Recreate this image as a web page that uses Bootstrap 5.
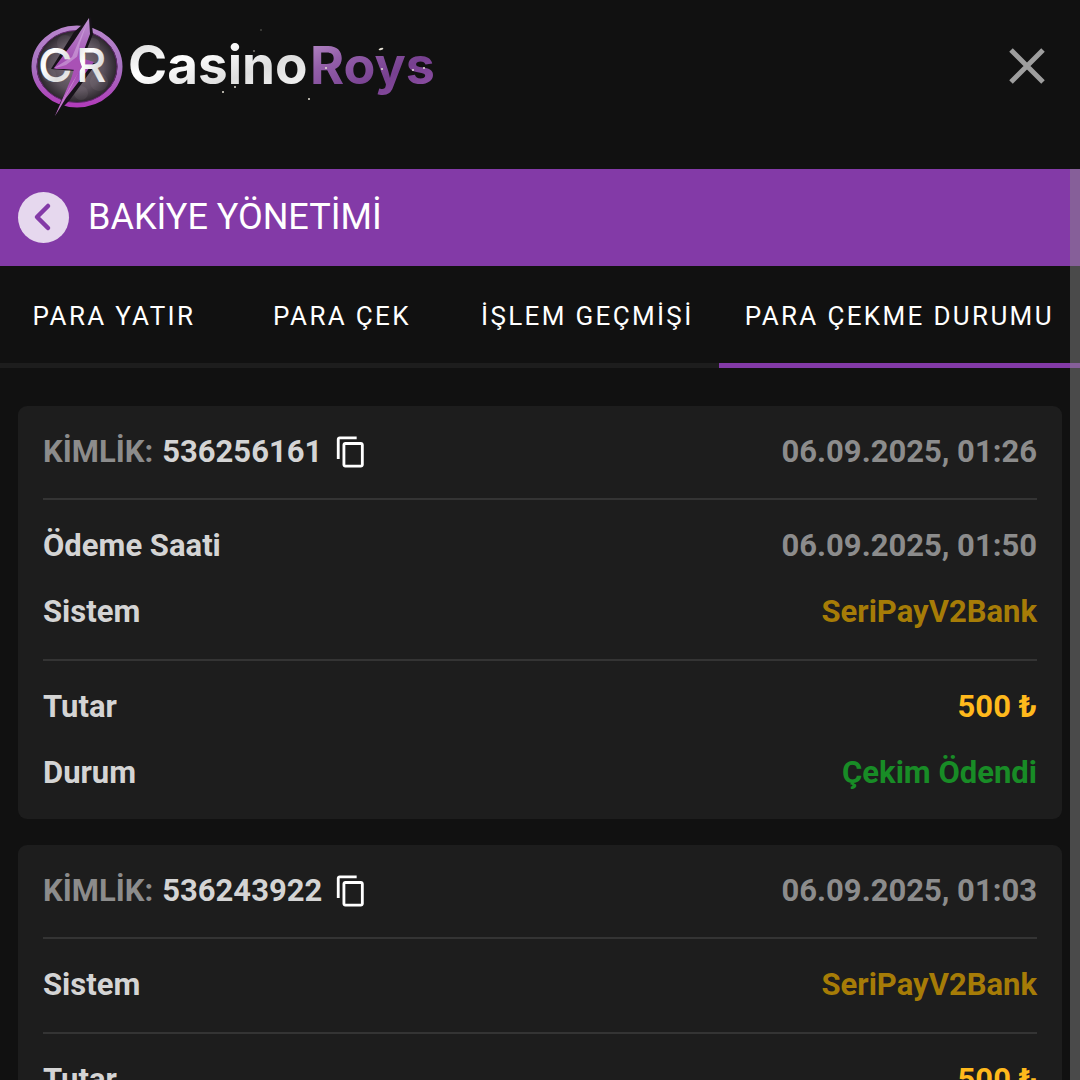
<!DOCTYPE html>
<html lang="tr">
<head>
<meta charset="utf-8">
<meta name="viewport" content="width=device-width, initial-scale=1">
<title>CasinoRoys</title>
<link href="https://cdn.jsdelivr.net/npm/bootstrap@5.3.0/dist/css/bootstrap.min.css" rel="stylesheet">
<style>
  body { background: #111; color: #d4d4d4; font-family: Roboto, "Noto Sans", sans-serif; }
  .site-head { padding: 10px 34px 39px 20px; }
  .brand-logo { width: 430px; height: 120px; }
  .close-btn { width: 38px; height: 38px; margin-top: 37px; color: #9e9e9e; }
  .title-bar { background: #833aa7; padding: 23px 18px; gap: 19px; }
  .title-bar h1 { font-size: 36px; line-height: 51px; font-weight: 400; color: #fff; }
  .back-btn { width: 51px; height: 51px; background: #e6d8ee; color: #833aa7; }
  .pay-tabs { box-shadow: inset 0 -5px #1d1d1d; }
  .pay-tabs .nav-link { min-width: 228px; padding: 30px 25px 27px; border-bottom: 5px solid transparent; border-radius: 0; font-size: 26px; line-height: 40px; letter-spacing: .09em; color: #fff; text-align: center; white-space: nowrap; }
  .pay-tabs .nav-link.active { border-color: #833aa7; }
  .pay-list { padding: 38px 18px; gap: 26px; }
  .pay-card { background: #1d1d1d; border-radius: 9px; padding: 0 25px; font-size: 31px; line-height: 40px; font-weight: 700; }
  .pay-part { padding: 26px 0; gap: 26px; }
  .pay-part:nth-child(2) { padding-bottom: 27px; }
  .pay-part + .pay-part { border-top: 2px solid #343434; }
  .tone-dim { color: #8c8c8c; }
  .tone-bank { color: #a67c07; }
  .tone-sum { color: #ffb91c; }
  .tone-paid { color: #188c26; }
  .id-gap { gap: 9px; }
  .copy-btn { color: #fff; width: 34px; height: 34px; margin-left: 3px; }
  .scroll-thumb { width: 10px; background: rgba(139, 139, 139, .47); }
</style>
<script src="https://cdn.jsdelivr.net/npm/bootstrap@5.3.0/dist/js/bootstrap.bundle.min.js"></script>
</head>
<body>
<svg width="0" height="0" class="position-absolute" aria-hidden="true">
  <symbol id="copy" viewBox="0 0 24 24"><path fill="currentColor" d="M16 1H4c-1.100 0-2 .9-2 2v14h2V3h12V1zm3 4H8c-1.100 0-2 .9-2 2v14c0 1.100.9 2 2 2h11c1.100 0 2-.9 2-2V7c0-1.100-.9-2-2-2zm0 16H8V7h11v14z"/></symbol>
</svg>
<div class="vh-100 d-flex flex-column overflow-hidden">
  <header class="site-head d-flex justify-content-between align-items-start flex-shrink-0">
    <a href="#" aria-label="CasinoRoys">
      <svg class="brand-logo d-block" viewBox="20 10 430 120">
        <defs>
          <linearGradient id="ring" x1="0" y1="0" x2="0" y2="1"><stop offset="0" stop-color="#b884cc"/><stop offset=".5" stop-color="#a672c0"/><stop offset="1" stop-color="#b13dba"/></linearGradient>
          <radialGradient id="moon"><stop offset="0" stop-color="#81757f"/><stop offset=".65" stop-color="#5b515b"/><stop offset="1" stop-color="#282329"/></radialGradient>
          <linearGradient id="silver" x1="0" y1="0" x2="1" y2="1"><stop offset="0" stop-color="#d0d0d0"/><stop offset=".35" stop-color="#fff"/><stop offset=".65" stop-color="#dedede"/><stop offset="1" stop-color="#fafafa"/></linearGradient>
          <linearGradient id="violet" x1="0" y1="0" x2="1" y2="1"><stop offset="0" stop-color="#bd93cd"/><stop offset=".3" stop-color="#935fa9"/><stop offset=".65" stop-color="#774090"/><stop offset="1" stop-color="#9353a9"/></linearGradient>
          <linearGradient id="bolt" x1="0" y1="0" x2="0" y2="1"><stop offset="0" stop-color="#bd91d0"/><stop offset=".5" stop-color="#9e45ae"/><stop offset="1" stop-color="#c674cd"/></linearGradient>
        </defs>
        <ellipse cx="77" cy="66.500" rx="41" ry="37" fill="url(#moon)"/>
        <g fill="#aaa0a9" opacity=".1"><circle cx="65" cy="43" r="8"/><circle cx="93" cy="45" r="7"/><circle cx="99" cy="82" r="9"/><circle cx="81" cy="93" r="7"/><circle cx="49" cy="75" r="7"/></g>
        <ellipse cx="77" cy="66.500" rx="43" ry="38.500" fill="none" stroke="url(#ring)" stroke-width="5"/>
        <ellipse cx="77" cy="66.500" rx="40" ry="36" fill="none" stroke="#61266c" stroke-width="1"/>
        <path d="M91 17 74 32 51 69 76 71 53 117 69 101 96 64 83 59 93 34Z" fill="#171219"/>
        <path d="M89 18 74 41 54 68 75 70 71 79 55 116 66 98 94 62 81 58 90 34Z" fill="url(#bolt)"/>
        <path d="M89 18 78 43 72 57 54 68 75 67 80 43Z" fill="#d0a3dc" opacity=".65"/>
        <path d="M80 69 69 89 55 116 73 83Z" fill="#e2afe5" opacity=".65"/>
        <g fill="url(#silver)" font-family="Inter, sans-serif" font-weight="500" font-size="47"><text x="38" y="82">C</text><text x="76" y="82">R</text></g>
        <path d="m78 56-12 9-13 4 21 0-5 18 13-20Z" fill="#a951b5"/>
        <g font-family="Inter, sans-serif" font-weight="700" font-size="53"><text x="128" y="84" fill="url(#silver)">Casino</text></g>
        <g font-family="Inter, sans-serif" font-weight="700" font-size="52"><text x="310" y="84" fill="url(#violet)">Roys</text></g>
        <g fill="#e5e1d5"><ellipse cx="381" cy="49" rx="2.500" ry="1" transform="rotate(-20 381 49)"/><circle cx="309" cy="99" r="1"/><circle cx="235" cy="87" r="1"/><circle cx="223" cy="92" r="1"/><circle cx="382" cy="69" r="1"/><circle cx="413" cy="70" r="1"/><circle cx="424" cy="68" r="1"/><circle cx="326" cy="68" r="1"/><circle cx="254" cy="51" r="1" opacity=".5"/><circle cx="261" cy="30" r="1" opacity=".25"/></g>
      </svg>
    </a>
    <button type="button" class="close-btn btn border-0 p-0 d-flex" aria-label="Kapat"><svg width="38" height="38" viewBox="0 0 38 38"><path d="M3 3 35 35M35 3 3 35" stroke="currentColor" stroke-width="5"/></svg></button>
  </header>
  <div class="position-relative flex-grow-1 overflow-hidden">
    <div class="title-bar d-flex align-items-center">
      <button type="button" class="back-btn btn border-0 rounded-circle p-0 flex-shrink-0" aria-label="Geri"><svg class="d-block" width="51" height="51" viewBox="0 0 51 51"><path d="M30 14 19 25 30 36" fill="none" stroke="currentColor" stroke-width="4.500" stroke-linecap="round" stroke-linejoin="round"/></svg></button>
      <h1 class="m-0">BAKİYE YÖNETİMİ</h1>
    </div>
    <nav class="pay-tabs nav flex-nowrap overflow-hidden">
      <a class="nav-link" href="#">PARA YATIR</a>
      <a class="nav-link" href="#">PARA ÇEK</a>
      <a class="nav-link" href="#">İŞLEM GEÇMİŞİ</a>
      <a class="nav-link active flex-grow-1" aria-current="page" href="#">PARA ÇEKME DURUMU</a>
    </nav>
    <main class="pay-list d-flex flex-column">
      <section class="pay-card">
        <div class="pay-part d-flex justify-content-between">
          <div class="d-flex align-items-center id-gap"><span class="tone-dim">KİMLİK:</span><span>536256161</span><button type="button" class="copy-btn btn border-0 p-0 d-flex" aria-label="Kopyala"><svg width="34" height="34"><use href="#copy"/></svg></button></div>
          <span class="tone-dim">06.09.2025, 01:26</span>
        </div>
        <div class="pay-part d-flex flex-column">
          <div class="d-flex justify-content-between"><span>Ödeme Saati</span><span class="tone-dim">06.09.2025, 01:50</span></div>
          <div class="d-flex justify-content-between"><span>Sistem</span><span class="tone-bank">SeriPayV2Bank</span></div>
        </div>
        <div class="pay-part d-flex flex-column">
          <div class="d-flex justify-content-between"><span>Tutar</span><span class="tone-sum">500 ₺</span></div>
          <div class="d-flex justify-content-between"><span>Durum</span><span class="tone-paid">Çekim Ödendi</span></div>
        </div>
      </section>
      <section class="pay-card">
        <div class="pay-part d-flex justify-content-between">
          <div class="d-flex align-items-center id-gap"><span class="tone-dim">KİMLİK:</span><span>536243922</span><button type="button" class="copy-btn btn border-0 p-0 d-flex" aria-label="Kopyala"><svg width="34" height="34"><use href="#copy"/></svg></button></div>
          <span class="tone-dim">06.09.2025, 01:03</span>
        </div>
        <div class="pay-part d-flex flex-column">
          <div class="d-flex justify-content-between"><span>Sistem</span><span class="tone-bank">SeriPayV2Bank</span></div>
        </div>
        <div class="pay-part d-flex flex-column">
          <div class="d-flex justify-content-between"><span>Tutar</span><span class="tone-sum">500 ₺</span></div>
        </div>
      </section>
    </main>
    <div class="scroll-thumb position-absolute top-0 bottom-0 end-0"></div>
  </div>
</div>
</body>
</html>
